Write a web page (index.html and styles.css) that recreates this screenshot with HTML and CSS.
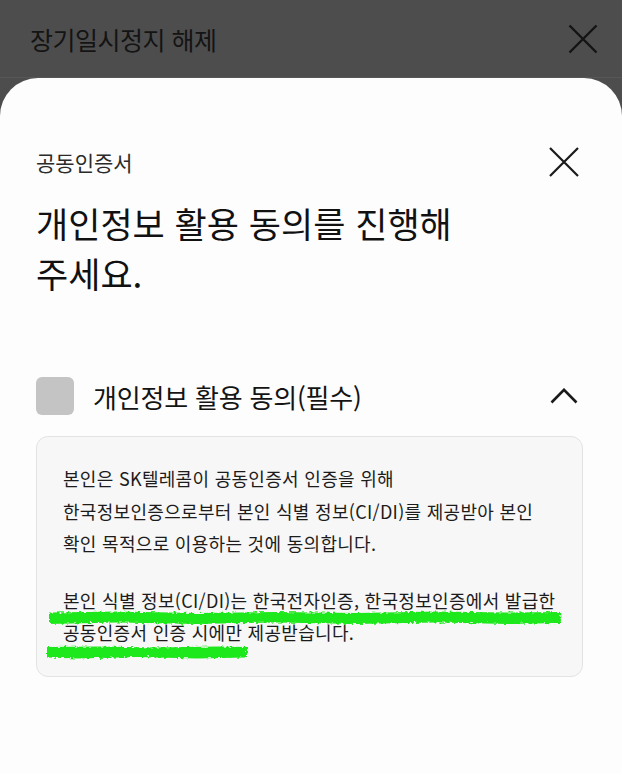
FILE: index.html
```html
<!DOCTYPE html>
<html lang="ko">
<head>
<meta charset="utf-8">
<title>장기일시정지 해제</title>
<link rel="stylesheet" href="styles.css">
</head>
<body>
<div class="screen">
  <header class="topbar">
    <h1 class="topbar-title">장기일시정지 해제</h1>
    <svg class="topbar-close" width="30" height="30" viewBox="0 0 30 30" aria-hidden="true">
      <path d="M1.5 1.5 L28.5 28.5 M28.5 1.5 L1.5 28.5" stroke="#141414" stroke-width="2.4" fill="none"/>
    </svg>
  </header>
  <section class="sheet">
    <div class="sheet-head">
      <span class="sheet-label">공동인증서</span>
      <svg class="sheet-close" width="30" height="30" viewBox="0 0 30 30" aria-hidden="true">
        <path d="M1 1 L29 29 M29 1 L1 29" stroke="#1a1a1a" stroke-width="2.2" fill="none"/>
      </svg>
    </div>
    <h2 class="headline">개인정보 활용 동의를 진행해<br>주세요.</h2>
    <div class="agree-row">
      <span class="checkbox"></span>
      <span class="agree-label">개인정보 활용 동의(필수)</span>
      <svg class="chevron" width="28" height="16" viewBox="0 0 28 16" aria-hidden="true">
        <path d="M1.5 14.5 L14 1.8 L26.5 14.5" stroke="#1a1a1a" stroke-width="2.6" fill="none"/>
      </svg>
    </div>
    <div class="terms">
      <p class="terms-p">본인은 SK텔레콤이 공동인증서 인증을 위해<br>한국정보인증으로부터 본인 식별 정보(CI/DI)를 제공받아 본인<br>확인 목적으로 이용하는 것에 동의합니다.</p>
      <p class="terms-p">본인 식별 정보(CI/DI)는 한국전자인증, 한국정보인증에서 발급한<br>공동인증서 인증 시에만 제공받습니다.</p>
      <svg class="marker" width="530" height="60" viewBox="0 0 530 60" aria-hidden="true">
        <defs>
          <filter id="rough" x="-5%" y="-50%" width="110%" height="200%">
            <feTurbulence type="fractalNoise" baseFrequency="0.3 0.5" numOctaves="2" seed="3" result="n"/>
            <feDisplacementMap in="SourceGraphic" in2="n" scale="5" xChannelSelector="R" yChannelSelector="G"/>
          </filter>
        </defs>
        <g filter="url(#rough)" fill="#1fe81c">
          <path d="M12 3.5 L80 2.5 L160 4 L240 3 L320 4 L400 2.5 L470 3.5 L523 3 L524 14 L470 15 L400 13.5 L320 15 L240 13.5 L160 15 L80 13.5 L12 15 Z"/>
          <path d="M10 38 L60 37.5 L120 38.5 L180 37.5 L210 38 L210 48.5 L160 49.5 L100 48 L40 49.5 L10 48.5 Z"/>
        </g>
      </svg>
    </div>
  </section>
</div>
</body>
</html>
```

FILE: styles.css
```css
* { box-sizing: border-box; }
html, body { margin: 0; padding: 0; }
body {
  width: 622px;
  height: 774px;
  overflow: hidden;
  background: #4d4d4d;
  font-family: "Noto Sans CJK KR", "Noto Sans", sans-serif;
  color: #111;
}
.screen {
  display: flex;
  flex-direction: column;
  height: 774px;
}
.topbar {
  height: 78px;
  flex: none;
  display: flex;
  align-items: center;
  justify-content: space-between;
  padding: 0 24px 0 30px;
  background: #4d4d4d;
  border-bottom: 1px solid #575757;
}
.topbar-title {
  margin: 0;
  font-size: 25px;
  font-weight: 400;
  letter-spacing: -0.5px;
  color: #141414;
}
.topbar-close { display: block; }
.sheet {
  flex: 1;
  background: #fdfdfd;
  border-radius: 38px 38px 0 0;
  padding: 69px 39px 0 36px;
}
.sheet-head {
  height: 30px;
  display: flex;
  align-items: center;
  justify-content: space-between;
  padding-right: 4px;
}
.sheet-label {
  font-size: 21px;
  letter-spacing: 0;
  color: #2a2a2a;
}
.sheet-close { display: block; }
.headline {
  margin: 21px 0 0;
  font-size: 35px;
  font-weight: 400;
  line-height: 50px;
  letter-spacing: 0;
  color: #111;
}
.agree-row {
  margin-top: 79px;
  height: 38px;
  display: flex;
  align-items: center;
}
.checkbox {
  width: 38px;
  height: 38px;
  border-radius: 6px;
  background: #c4c4c4;
  flex: none;
}
.agree-label {
  margin-left: 19px;
  font-size: 26px;
  letter-spacing: -0.2px;
  color: #141414;
  flex: 1;
}
.chevron {
  display: block;
  margin-right: 5px;
}
.terms {
  position: relative;
  margin-top: 21px;
  height: 241px;
  background: #f7f7f7;
  border: 1px solid #e3e3e3;
  border-radius: 12px;
  padding: 25px 10px 0 26px;
}
.terms-p {
  margin: 0;
  font-size: 18px;
  line-height: 32.5px;
  letter-spacing: 0.3px;
  color: #1c1c1c;
  white-space: nowrap;
}
.terms-p + .terms-p { margin-top: 24px; }
.marker {
  position: absolute;
  left: 0;
  top: 172px;
}
```
